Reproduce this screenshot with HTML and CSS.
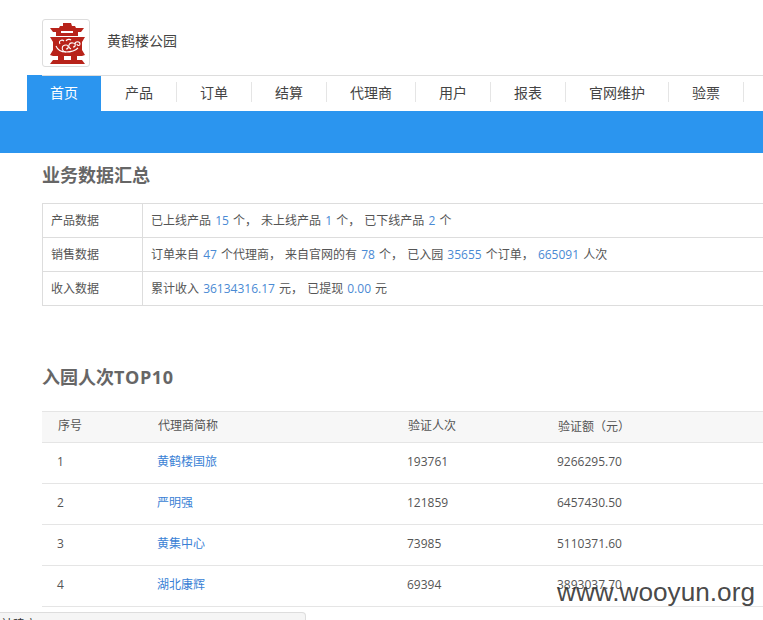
FILE: index.html
```html
<!DOCTYPE html>
<html lang="zh">
<head>
<meta charset="utf-8">
<title>黄鹤楼公园</title>
<link rel="stylesheet" href="styles.css">
</head>
<body>
<header class="brand">
  <div class="logo">
    <svg width="35" height="41" viewBox="0 0 35 41" fill="#b8231a">
      <path d="M13 0h8l1 3h3l1 2H9l1-2h3z"/>
      <path d="M0 5h34l-3 4h-3v4H6V9H3zM11 8v2h12V8z" fill-rule="evenodd"/>
      <path d="M0 14h35l-3 5v8l3 5-3 1H3l-3-1 3-5v-8z"/>
      <g fill="none" stroke="#fff" stroke-width="1.1">
        <path d="M6 23c2 5 6 6 10 6s9-1 12-4"/>
        <path d="M16 29c-5-1-5-7 0-7 3 0 3 4 0 4"/>
        <path d="M21 26c-4-2-2-7 2-6 3 0 3 4 0 4"/>
        <path d="M25 21c0-3 5-3 5 0 0 2-3 2-3 0"/>
        <path d="M10 21c-2-3 2-5 4-3"/>
        <path d="M16 18c1-2 4-2 5-1"/>
      </g>
      <path d="M8 33h6v4h7v-4h6v4h5l3 4H0l3-4h5z"/>
    </svg>
  </div>
  <span class="brand-name">黄鹤楼公园</span>
</header>
<nav class="nav">
  <a class="nav-item active">首页</a>
  <a class="nav-item">产品</a>
  <a class="nav-item">订单</a>
  <a class="nav-item">结算</a>
  <a class="nav-item">代理商</a>
  <a class="nav-item">用户</a>
  <a class="nav-item">报表</a>
  <a class="nav-item">官网维护</a>
  <a class="nav-item">验票</a>
</nav>
<div class="band"></div>
<main class="content">
  <h2 class="title">业务数据汇总</h2>
  <table class="summary">
    <tr><th>产品数据</th><td>已上线产品 <b>15</b> 个， 未上线产品 <b>1</b> 个， 已下线产品 <b>2</b> 个</td></tr>
    <tr><th>销售数据</th><td>订单来自 <b>47</b> 个代理商， 来自官网的有 <b>78</b> 个， 已入园 <b>35655</b> 个订单， <b>665091</b> 人次</td></tr>
    <tr><th>收入数据</th><td>累计收入 <b>36134316.17</b> 元， 已提现 <b>0.00</b> 元</td></tr>
  </table>
  <h2 class="title title-top">入园人次<span class="latin">TOP10</span></h2>
  <table class="rank">
    <thead><tr><th class="c1">序号</th><th class="c2">代理商简称</th><th class="c3">验证人次</th><th class="c4">验证额<span class="paren">（元）</span></th></tr></thead>
    <tbody>
      <tr><td>1</td><td><a>黄鹤楼国旅</a></td><td>193761</td><td>9266295.70</td></tr>
      <tr><td>2</td><td><a>严明强</a></td><td>121859</td><td>6457430.50</td></tr>
      <tr><td>3</td><td><a>黄集中心</a></td><td>73985</td><td>5110371.60</td></tr>
      <tr><td>4</td><td><a>湖北康辉</a></td><td>69394</td><td>3893037.70</td></tr>
    </tbody>
  </table>
</main>
<div class="status">社建立</div>
<div class="watermark">www.wooyun.org</div>
</body>
</html>
```
FILE: styles.css
```css
* { box-sizing: border-box; }
html, body { margin: 0; height: 620px; overflow: hidden; background: #fff; }
body {
  position: relative;
  width: 763px;
  font: 12px/1.5 "Open Sans", "Noto Sans CJK SC", sans-serif;
  color: #555;
}
.brand { display: flex; align-items: flex-start; gap: 17px; height: 75px; padding: 19px 0 0 42px; }
.logo {
  width: 48px; height: 48px; padding-left: 3px;
  border: 1px solid #ddd; border-radius: 3px;
  display: flex; align-items: center; justify-content: center;
}
.brand-name { margin-top: 11px; font-size: 14px; line-height: 21px; color: #444; }
.nav { position: relative; display: flex; height: 36px; margin-left: 27px; width: 736px; }
.nav::before {
  content: ""; position: absolute; z-index: 1; left: 15px; right: 0; top: 0; height: 1px; background: #ddd;
}
.nav-item {
  position: relative; flex: none;
  padding: 0 23px 0 24px; line-height: 36px; font-size: 14px; color: #444;
  white-space: nowrap;
}
.nav-item:not(.active)::after {
  content: ""; position: absolute; right: -1px; top: 7px; width: 1px; height: 20px; background: #e5e5e5;
}
.nav-item.active { width: 74px; padding: 0; text-align: center; background: #2b95ef; color: #fff; }
.band { height: 42px; background: #2b95ef; }
.content { padding-left: 42px; width: 800px; }
.title { margin: 0; height: 50px; font-size: 18px; line-height: 44px; font-weight: 700; color: #666; }
.title-top { height: 58px; margin-top: 47px; line-height: 48px; }
.latin { letter-spacing: .6px; }
table { border-collapse: collapse; width: 760px; table-layout: fixed; }
.summary { word-spacing: 1px; }
.summary th, .summary td { border: 1px solid #ddd; height: 34px; padding: 0 8px; font-weight: 400; text-align: left; }
.summary th { width: 100px; }
.summary b { font-weight: 400; color: #4a8ad4; }
.rank { border-top: 1px solid #e5e5e5; }
.rank th { height: 31px; background: #f7f7f7; border-bottom: 1px solid #e5e5e5; font-weight: 400; text-align: left; padding: 0 0 2px 16px; }
.rank td { height: 41px; border-bottom: 1px solid #e5e5e5; padding: 0 0 2px 15px; }
.rank a { color: #3a7fd5; }
.paren { font-family: "Noto Sans CJK TC", sans-serif; }
.c1 { width: 100px; }
.c2 { width: 250px; }
.c3 { width: 150px; }
.status {
  position: absolute; left: 0; top: 612px; width: 306px; height: 20px;
  padding: 3px 0 0 1px; background: #f5f5f5; border: 1px solid #ddd; border-left: 0; border-radius: 0 4px 0 0;
  color: #333; line-height: 18px;
}
.watermark {
  position: absolute; left: 557px; top: 574px;
  font: 26.2px/36px "Liberation Sans", sans-serif; color: rgba(50, 50, 50, .9); white-space: nowrap;
}
```
